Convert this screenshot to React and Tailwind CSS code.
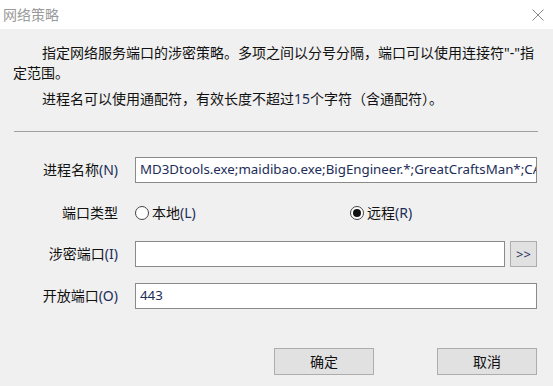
import React from "react";

const cjk = { fontFamily: '"Noto Sans", "Noto Sans CJK SC", sans-serif' };

function Lat({ children }) {
  return <span className="text-[#1c2d58]">{children}</span>;
}

function Label({ cn, key2 }) {
  return (
    <div className="w-[118px] flex justify-end text-[14px] text-[#111] leading-[20px] whitespace-nowrap">
      <span>{cn}</span>
      {key2 && <Lat>({key2})</Lat>}
    </div>
  );
}

function Input({ value, w = "w-[402px]" }) {
  return (
    <div
      className={`${w} h-[26px] bg-white border border-[#8a8a8a] flex items-center pl-[4px] overflow-hidden whitespace-nowrap text-[13.3px] text-[#1c2d58]`}
    >
      {value}
    </div>
  );
}

function Radio({ checked, label, k }) {
  return (
    <div className="flex items-center gap-[3px] text-[14px] text-[#111] leading-[20px]">
      <span className="w-[14px] h-[14px] rounded-full border border-[#444] bg-white flex items-center justify-center">
        {checked && <span className="w-[8px] h-[8px] rounded-full bg-[#111]" />}
      </span>
      <span>
        {label}
        <Lat>({k})</Lat>
      </span>
    </div>
  );
}

export default function App() {
  return (
    <div className="w-[553px] h-[386px] bg-[#f0f0f0] flex flex-col overflow-hidden" style={cjk}>
      <div className="h-[29px] bg-white flex items-center justify-between pl-[3px] pr-[9px] shrink-0">
        <span className="text-[14px] text-[#9a9a9a] leading-[20px]">网络策略</span>
        <svg width="12" height="12" viewBox="0 0 12 12" className="mt-[1px]">
          <path d="M0.5 0.5 L11.5 11.5 M11.5 0.5 L0.5 11.5" stroke="#8a8a8a" strokeWidth="1" fill="none" />
        </svg>
      </div>

      <div className="pt-[14px] pl-[13px] w-[536px] text-[14px] leading-[20px] text-[#111]">
        <p className="indent-[29px]">
          指定网络服务端口的涉密策略。多项之间以分号分隔，端口可以使用连接符"-"指定范围。
        </p>
        <p className="indent-[29px] mt-[6px]">
          进程名可以使用通配符，有效长度不超过<Lat>15</Lat>个字符（含通配符）。
        </p>
      </div>

      <div className="mt-[22px] ml-[14px] w-[524px] h-px bg-[#a0a0a0]" />

      <div className="flex flex-col mt-[25px]">
        <div className="flex items-center gap-[17px]">
          <Label cn="进程名称" key2="N" />
          <Input value="MD3Dtools.exe;maidibao.exe;BigEngineer.*;GreatCraftsMan*;CAXA*" />
        </div>

        <div className="flex items-center gap-[17px] mt-[17px] h-[26px]">
          <Label cn="端口类型" key2="" />
          <div className="flex items-center">
            <div className="w-[215px]">
              <Radio label="本地" k="L" />
            </div>
            <Radio checked label="远程" k="R" />
          </div>
        </div>

        <div className="flex items-center gap-[17px] mt-[15px]">
          <Label cn="涉密端口" key2="I" />
          <div className="flex items-center gap-[5px]">
            <Input value="" w="w-[370px]" />
            <div className="w-[27px] h-[26px] bg-[#e1e1e1] border border-[#adadad] flex items-center justify-center text-[13px] text-[#1c2d58] leading-none">
              &gt;&gt;
            </div>
          </div>
        </div>

        <div className="flex items-center gap-[17px] mt-[16px]">
          <Label cn="开放端口" key2="O" />
          <Input value="443" />
        </div>
      </div>

      <div className="flex justify-end gap-[63px] pr-[16px] mt-[39px]">
        <div className="w-[100px] h-[27px] bg-[#e1e1e1] border border-[#adadad] flex items-center justify-center text-[14px] text-[#111]">
          确定
        </div>
        <div className="w-[100px] h-[27px] bg-[#e1e1e1] border border-[#adadad] flex items-center justify-center text-[14px] text-[#111]">
          取消
        </div>
      </div>
    </div>
  );
}
